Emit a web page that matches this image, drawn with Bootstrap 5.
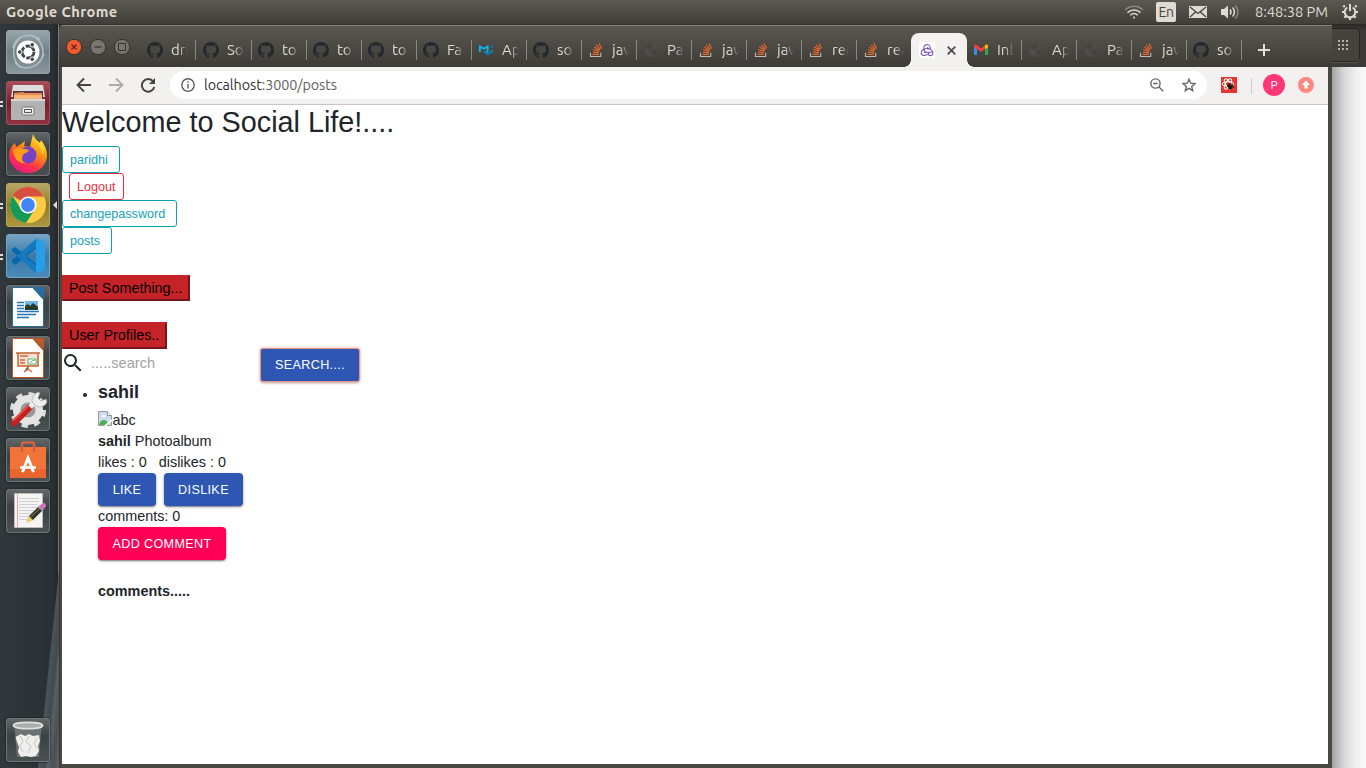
<!DOCTYPE html>
<html lang="en">
<head>
<meta charset="utf-8">
<title>Social Life</title>
<link href="https://cdn.jsdelivr.net/npm/bootstrap@5.3.0/dist/css/bootstrap.min.css" rel="stylesheet">
<style>
html,body{height:768px;overflow:hidden}
body{font-family:"Liberation Sans",Arial,sans-serif;font-size:14.4px;line-height:21px;color:#212529;background:#2e3436}
svg{display:block;flex:none}
.ui-font{font-family:Ubuntu,"Noto Sans",sans-serif}
.top-panel{height:24px;background:linear-gradient(#5b5950,#403e39);color:#dfdbd2;padding:0 7px 0 6px;font-size:14px;line-height:24px}
.top-panel .app-name{font-weight:700;font-size:14.67px;letter-spacing:.38px}
.lang{width:20px;height:20px;background:#dfdbd2;color:#45433e;border-radius:2px;font-size:14px;line-height:21px;letter-spacing:-.4px}
.clock{width:75px;font-size:14.67px;letter-spacing:-.05px;white-space:nowrap}
.desk{height:744px}
.launcher{width:59px;padding:6px 0 6px 6px;background:linear-gradient(96deg,transparent 0 76%,#4b5357 77%,#414b4f 84%,#586063 87%,#485156 93%,#5d6365) 0 460px/59px 284px no-repeat,linear-gradient(90deg,#30383b 0,#2a3033 53px,#222729 58px,#777 58px);gap:7px}
.tile{width:44px;height:44px;border-radius:4px;background:linear-gradient(#64686a,#3b4244 40%,#4b5153);box-shadow:inset 0 0 0 1px #6d7273,0 0 2px #111}
.tile.t-dash{background:linear-gradient(#9ba8ad,#6f7f85 50%,#8b999e);box-shadow:inset 0 0 0 1px #94a1a6}
.tile.t-files{background:linear-gradient(#a8505a,#78202c 50%,#8e3440);box-shadow:inset 0 0 0 1px #a44f59}
.tile.t-chrome{background:linear-gradient(#b8a969,#927c27 50%,#ad973e);box-shadow:inset 0 0 0 1px #b9a75d}
.tile.t-code{background:linear-gradient(#79a7c7,#397aa8 50%,#4c8bb8);box-shadow:inset 0 0 0 1px #76a3c3}
.pips{left:-6px;top:19px}
.pointer{left:46px;top:17px}
.win{width:1273px;background:#4b4842;padding:0 4px 4px 3px;border-top-left-radius:6px;box-shadow:inset 1px 0 #37352f}
.desk-back{background:linear-gradient(#292824,#3c3b37 6px)}
.tabstrip{height:43px;margin:0 -4px 0 -3px;background:linear-gradient(#33312d 0 1px,#85827a 1px 2px,#5a574e 2px,#3c3b37);border-radius:6px 0 0 0;padding-left:7px;color:#dfdbd2}
.winbtns{width:75px;gap:8px;padding-top:2px}
.tabx{width:55px;height:34px;padding-left:6px;gap:8px;position:relative;margin-top:9px}
.tabx.lead-tab{width:56px}
.tabx::after{content:"";position:absolute;right:0;top:7px;height:20px;width:1px;background:#8b8880}
.tabx.plain{width:54px}
.tabx.lead-tab::after{right:1px}
.tabx.plain::after,.tabx.current::after{display:none}
.tabx span{width:17px;flex:none;white-space:nowrap;font-size:15px;line-height:24px;-webkit-mask-image:linear-gradient(90deg,#000 45%,transparent);mask-image:linear-gradient(90deg,#000 45%,transparent)}
.tabx.current{background:#f2f1f0;border-radius:8px 8px 0 0;width:56px;padding-left:8px;gap:12px}
.tabx.current::before{content:"";position:absolute;left:-7px;right:-7px;bottom:0;height:7px;background:radial-gradient(circle at 0 0,transparent 6.5px,#f2f1f0 7px) 0 0/7px 7px no-repeat,radial-gradient(circle at 100% 0,transparent 6.5px,#f2f1f0 7px) 100% 0/7px 7px no-repeat}
.fav-box{background:#fff;border-radius:2px;position:relative}
.toolbar{height:38px;background:#f2f1f0;border-bottom:1px solid #c9c7c5;padding-left:14px;padding-right:13px}
.omnibox{width:1037px;height:28px;margin-left:14px;margin-top:-1px;border-radius:14px;background:#fff;padding:0 11px;color:#5f5f5f;font-size:14.4px;letter-spacing:-.09px}
.omnibox b{font-weight:400;color:#333}
.avatar{width:22px;height:22px;border-radius:50%;background:#ff3775;color:#fff;font-size:12px;line-height:22px}
.page{height:659px;background:#fff}
.page h2{font-size:28.8px;line-height:34px;margin:0 0 7px;font-weight:400}
.btn-mini{--bs-btn-padding-y:0;padding:1px 7px 0;font-size:12.6px;line-height:25px;border-radius:3px;height:27px;text-align:left}
.btn-teal{color:#17a2b8;border-color:#08a0b5}
.btn-rouge{color:#ea303f;border-color:#e12c45}
.native{background:#c62328;border:2px solid;border-color:#c62328 #74171b #74171b #c62328;color:#000;height:26px;line-height:22px;padding:0 5px;text-align:left}
.btn-mat{background:#2d57b2;color:#fff;font-size:12.6px;letter-spacing:.36px;line-height:31px;height:33px;padding:2px 0 0;border:0;border-radius:4px;box-shadow:0 1px 3px rgba(0,0,0,.35),0 1px 1px rgba(0,0,0,.25)}
.btn-mat.pink{background:#ff0056}
.btn-mat.ring{border-radius:2px;box-shadow:0 0 0 1px #e6958a,0 0 3px 1px #e6a59b,0 2px 3px rgba(0,0,0,.3)}
.search-row{height:32px}
.search-row input{width:170px;height:28px;border:0;outline:0;padding:0;margin-left:6px;font-size:14.6px}
.search-row input::placeholder{color:#a2a2a2;opacity:1}
.post-list{padding-left:36px;margin:0}
.post-list h5{font-size:18px;line-height:22px;font-weight:700;margin:0 0 7px}
.dot{left:-15px;top:12px;width:4px;height:4px;border-radius:50%;background:#212529}
.side{width:34px}
.side-top{height:43px;background:linear-gradient(#292824,#3c3b37 6px);}
.side-top div{width:28px;height:34px;margin-top:4px;border:1px solid #25241f;border-left:0;border-radius:0 5px 5px 0;background:#45433d;box-shadow:0 1px #55534c}
.side-body{background:linear-gradient(90deg,#a2a2a2,#d4d4d4 11px,#efefef 23px,#fafafa)}
</style>
</head>
<body>
<svg width="0" height="0" class="position-absolute">
<defs>
<symbol id="gh" viewBox="0 0 16 16"><path fill="#24292e" d="M8 0C3.58 0 0 3.58 0 8c0 3.54 2.29 6.53 5.47 7.59.4.07.55-.17.55-.38 0-.19-.01-.82-.01-1.49-2.01.37-2.53-.49-2.69-.94-.09-.23-.48-.94-.82-1.13-.28-.15-.68-.52-.01-.53.63-.01 1.08.58 1.23.82.72 1.21 1.87.87 2.33.66.07-.52.28-.87.51-1.07-1.78-.2-3.64-.89-3.64-3.95 0-.87.31-1.59.82-2.15-.08-.2-.36-1.02.08-2.12 0 0 .67-.21 2.2.82.64-.18 1.32-.27 2-.27s1.36.09 2 .27c1.53-1.04 2.2-.82 2.2-.82.44 1.1.16 1.92.08 2.12.51.56.82 1.27.82 2.15 0 3.07-1.87 3.75-3.65 3.95.29.25.54.73.54 1.48 0 1.07-.01 1.93-.01 2.2 0 .21.15.46.55.38A8.01 8.01 0 0 0 16 8c0-4.42-3.58-8-8-8z"/></symbol>
<symbol id="so" viewBox="0 0 16 16"><path d="M2.500 10.700v3.800h10.200v-3.800" fill="none" stroke="#bcbbbb" stroke-width="1.100"/><path d="M4.500 12.300h6.300M4.700 10l6.200.6M5.200 7.500l6 1.800M6.300 5l5.300 3.200M8.200 2.800l4.200 4.500M11 1.400l2.600 5" stroke="#f26a25" stroke-width="1.150"/></symbol>
<symbol id="mui" viewBox="0 0 16 16"><path d="M1.900 10V4.400l3.900 2.300 3.900-2.300v4.800l-3 1.600" fill="none" stroke="#0db4f4" stroke-width="1.800"/><path d="M6.200 10l3.600 2.300 4.300-2.500V7.700M14.100 3.600v2.200" fill="none" stroke="#087fc0" stroke-width="1.800"/></symbol>
<symbol id="globe" viewBox="0 0 16 16"><circle cx="8" cy="8" r="7" fill="#4d4d4d"/><path fill="#444340" d="M3 4l3-2 3 1 1 2-2 1v2L5 7 2 6zM8 9l4-1 2-3 .8 3-2 4-3 2-1-2z"/></symbol>
<symbol id="redux" viewBox="0 0 16 16"><g fill="none" stroke="#7c52bd" stroke-width="1.050"><path d="M6 10C4 6.800 4.400 2.600 8 2.500c3 0 3.800 2.700 3.100 4.900M9.800 7.100C6.700 5.400 2.500 7.500 2.200 10.500c-.2 3.200 3.800 3.900 6.100 1.800M6.600 10.300h6.800M8.300 6.200c3.600.2 6.200 3 5.500 5.800-.7 2.200-3.700 2-5 .2"/></g><g fill="#7c52bd"><circle cx="8.700" cy="6.200" r="1"/><circle cx="6.200" cy="10.300" r="1"/><circle cx="9.500" cy="11.800" r="1"/></g></symbol>
<symbol id="gmail" viewBox="0 0 16 16"><path fill="#4285f4" d="M1 4v9h3V7z"/><path fill="#34a853" d="M12 7v6h3V4z"/><path fill="#ea4335" d="M1 3.500c0-1 1.500-1.500 2.500-.7L8 6.200l4.500-3.400L12 7 8 10 1 5z"/><path fill="#fbbc04" d="M12 3.200c1.500-1.200 3-.5 3 .8v1l-3 2.200z"/></symbol>
<linearGradient id="ffg" x1=".8" y1="0" x2=".25" y2="1"><stop stop-color="#fff044"/><stop offset=".38" stop-color="#ff980e"/><stop offset=".7" stop-color="#ff3647"/><stop offset="1" stop-color="#e31587"/></linearGradient>
</defs>
</svg>

<div class="top-panel ui-font d-flex align-items-center">
  <div class="app-name me-auto">Google Chrome</div>
  <svg width="20" height="16" viewBox="0 0 20 16" fill="none" stroke="#dfdbd2" stroke-width="1.500"><path stroke="#8c8980" d="M1 6c5-5 13-5 18 0"/><path d="M3.500 8.600c3.800-3.600 9.200-3.600 13 0M6.300 11.200c2.200-2 5.200-2 7.400 0"/><circle cx="10" cy="13.500" r="1" fill="#dfdbd2" stroke="none"/></svg>
  <div class="lang text-center" style="margin-left:12px">En</div>
  <svg style="margin-left:13px" width="18" height="12" viewBox="0 0 18 12"><path fill="#dfdbd2" d="M0 0h18v12H0z"/><path d="M1 1l8 6.500L17 1M1 11l5.500-5M17 11l-5.500-5" fill="none" stroke="#45433e" stroke-width="1.300"/></svg>
  <svg style="margin-left:13px" width="21" height="16" viewBox="0 0 21 16" fill="none"><path fill="#dfdbd2" d="M1 5h3l4-3.500v13L4 11H1z"/><path stroke="#dfdbd2" stroke-width="1.500" d="M10 5.500q2 2.500 0 5M12.700 3.500q3.600 4.500 0 9"/><path stroke="#8c8980" stroke-width="1.500" d="M15.500 1.500q5 6.500 0 13"/></svg>
  <div class="clock" style="margin-left:14px">8:48:38 PM</div>
  <svg style="margin-left:11px" width="18" height="18" viewBox="0 0 18 18" fill="none" stroke="#dfdbd2"><path stroke-width="2" d="M6.300 4.500a5.300 5.300 0 1 0 5.400 0M9 1v7"/><path stroke-width="2.200" d="M3.800 4L2.300 2.500M14.200 4l1.500-1.500M3.500 9H1M17 9h-2.500M5 13l-1.700 1.700M13 13l1.700 1.700M9 14.500V17"/></svg>
</div>

<div class="desk d-flex">
  <nav class="launcher d-flex flex-column flex-shrink-0">
    <div class="tile t-dash"><svg width="44" height="44" viewBox="0 0 44 44"><g fill="none" stroke="#b4bec2" stroke-width="1.500"><path d="M7 18C9 6 23 2 34 9M24 5c12 3 17 17 9 28M38 24C33 38 19 42 9 33M15 38C6 30 5 18 13 9"/></g><circle cx="22" cy="22" r="11.500" fill="#fff"/><circle cx="22" cy="22" r="6" fill="none" stroke="#40494c" stroke-width="2.800" stroke-dasharray="11 1.560"/><g fill="#40494c" stroke="#fff"><circle cx="13.800" cy="22" r="2.300"/><circle cx="26.200" cy="14.800" r="2.300"/><circle cx="26.200" cy="29.200" r="2.300"/></g></svg></div>
    <div class="tile t-files position-relative"><svg width="44" height="44" viewBox="0 0 44 44"><path fill="#ddd" d="M7 4h30l2 12H5z"/><path fill="#534" d="M7 10h30v9H7z"/><path fill="#e58b4b" d="M8 12l9-1 2 1h17v6H8z"/><path fill="#f7b47b" d="M8 14h28v4H8z"/><rect x="5" y="18" width="34" height="21" rx="1" fill="#b3b3b3"/><path fill="#d6d6d6" d="M5 18h34v2H5z"/><rect x="16" y="26" width="12" height="8" rx="1" fill="#eee" stroke="#777"/><path fill="none" stroke="#555" d="M18.500 28.500h7v3h-7z"/></svg><svg class="pips position-absolute" width="4" height="8"><path d="M0 2h3M0 6h3" stroke="#ddd" stroke-width="2"/></svg></div>
    <div class="tile"><svg width="44" height="44" viewBox="0 0 44 44"><path fill="url(#ffg)" d="M27 2c0 5 4 6 7 9l1-3c4 5 6 10 6 15 0 10-8 18-19 18S3 33 3 23c0-5 3-10 6-12l1 4 5-3 4-3-1 5 6 1z"/><circle cx="22" cy="23" r="8.500" fill="#7543c5"/><path fill="#ff9d19" d="M7 18c5-4 9-1 12-1l4 1c-1 3-5 3-6 5-2 4-1 7 3 8-7 1-12-4-13-13z"/><path fill="#ffdd35" d="M27 2c0 7 10 10 9 21 3-5 1-9-1-13l-2 1c-3-3-4-5-6-9z"/></svg></div>
    <div class="tile t-chrome position-relative"><svg width="44" height="44" viewBox="0 0 44 44"><circle cx="22" cy="22" r="18" fill="#fbcb42"/><path fill="#d94f3f" d="M22 22L6.500 12.800A18 18 0 0 1 37.800 13.500H22z"/><path fill="#149b57" d="M6.400 13A18 18 0 0 0 20 39.900l9-13.900-7 4-7-4z"/><circle cx="22" cy="22" r="8.600" fill="#fff"/><circle cx="22" cy="22" r="6.900" fill="#4285f4"/></svg><svg class="pips position-absolute" width="4" height="8"><path d="M0 2h3M0 6h3" stroke="#ddd" stroke-width="2"/></svg><svg class="pointer position-absolute" width="5" height="10"><path d="M5 1v8L1 5z" fill="#ddd"/></svg></div>
    <div class="tile t-code position-relative"><svg width="44" height="44" viewBox="0 0 44 44"><path d="M6 15l3-2 23 18v8L6 17zM6 28l3 3 23-18V5L6 26z" fill="#0868ad"/><path fill="#2a9de8" d="M30 4l9 4v28l-9 4V4z"/><path fill="#147bc0" d="M30 13L18 22l12 9v8L13 24v-4L30 5z"/></svg><svg class="pips position-absolute" width="4" height="8"><path d="M0 2h3M0 6h3" stroke="#ddd" stroke-width="2"/></svg></div>
    <div class="tile"><svg width="44" height="44" viewBox="0 0 44 44"><path fill="#fff" stroke="#236fa2" d="M6.500 2.500h20l11 12v27h-31z"/><path fill="#236fa2" d="M27 2h11v12z"/><path stroke="#2678b5" stroke-width="1.700" d="M11 17.500h7M11 20.500h7M11 23.500h7M11 26.500h22M11 29.500h19M11 32.500h12"/><path fill="#71b7e8" d="M19 16h13v9H19z"/><path fill="#293b2d" d="M19 25v-4l3-2 2 2 3-3 5 4v3z"/></svg></div>
    <div class="tile"><svg width="44" height="44" viewBox="0 0 44 44"><path fill="#fff" stroke="#bd5725" d="M6.500 2.500h20l11 12v27h-31z"/><path fill="#bd5725" d="M27 2h11v12z"/><path fill="#f8e1d5" stroke="#c86032" stroke-width="1.500" d="M12 17h20v13H12zM10 17h24"/><path stroke="#d06a3b" stroke-width="1.500" d="M14 20h8M14 24h5M14 27h5M22 30v3l-4 3M22 33l4 3"/><path fill="#fff" stroke="#5b7" d="M22 23h8v5h-8zM24 27l2-2 3-1"/></svg></div>
    <div class="tile"><svg width="44" height="44" viewBox="0 0 44 44"><circle cx="22" cy="23" r="15.800" fill="none" stroke="#ddd" stroke-width="4.500" stroke-dasharray="6.200 6.200"/><circle cx="22" cy="23" r="11" fill="none" stroke="#e4e4e4" stroke-width="8"/><circle cx="22" cy="23" r="7.500" fill="#999"/><path d="M8 36L23 21" stroke="#c3201f" stroke-width="6.500" stroke-linecap="round"/><path d="M7 34L22 19" stroke="#ed5a57" stroke-width="1.500"/><path d="M24 20l6-6" stroke="#eee" stroke-width="5"/><path fill="#eee" stroke="#999" stroke-width=".6" d="M26 15c0-5 2-8 6-10l2 1-2 5 3 3 5-2 1 3c-2 5-8 6-11 4z"/></svg></div>
    <div class="tile"><svg width="44" height="44" viewBox="0 0 44 44"><path fill="none" stroke="#cf6546" stroke-width="2.500" d="M16 13V6q0-1.500 1.500-1.500h9Q28 4.500 28 6v7"/><path fill="#f37439" d="M4 9h36v31H4z"/><path fill="#e9652f" d="M4 31h36v9H4z"/><path fill="none" stroke="#c65d43" stroke-width="2" d="M16 9v5M28 9v5"/><path d="M16.500 34l5.500-14 5.500 14" fill="none" stroke="#fff" stroke-width="3"/><path stroke="#fff" stroke-width="2.500" d="M14 29.500h16"/></svg></div>
    <div class="tile"><svg width="44" height="44" viewBox="0 0 44 44"><path fill="#f4f4f2" stroke="#bbb" d="M8.500 4.500h28v34h-28z"/><path stroke="#cfd0d3" d="M13 9.500h20M13 12.500h20M13 15.500h18M13 18.500h19M13 21.500h16M13 24.500h14M13 27.500h10M13 30.500h8"/><path stroke="#e9a5a5" d="M11.500 5v33"/><path fill="#e8ce6c" d="M20 34l3-8 5 5z"/><path d="M25 29L35 19" stroke="#30342b" stroke-width="5.500"/><path d="M25 28L35 18" stroke="#7a8061"/><path d="M34 20l2-2" stroke="#bbb" stroke-width="6"/><path d="M36 18l1.500-1.500" stroke="#cd72b6" stroke-width="5" stroke-linecap="round"/></svg></div>
    <div class="tile mt-auto"><svg width="44" height="44" viewBox="0 0 44 44"><path fill="#899090" opacity=".6" d="M8.500 9h27L33 39H11z"/><path fill="#eeeeec" d="M9.500 19l5.500-3 4 2 4-2 4 2 6-1 1 6-2 5 1 5-3 5-5 1-5-1-5 1-3-5 1-5-2-5z"/><path stroke="#c4c6c4" fill="none" d="M14 18l3 5-3 5 3 6M23 18l-3 6 5 4-3 7M31 20l-3 6 3 4"/><ellipse cx="22" cy="7.500" rx="14.500" ry="3.200" fill="#a9adab" stroke="#e1e2df" stroke-width="1.800"/></svg></div>
  </nav>

  <div class="desk-back flex-shrink-0"><main class="win">
    <div class="tabstrip ui-font d-flex align-items-center">
      <div class="winbtns d-flex">
        <svg width="16" height="16" viewBox="0 0 16 16"><circle cx="8" cy="8" r="7.700" fill="#f15a30" stroke="#33312d"/><path d="M5.500 5.500l5 5m0-5l-5 5" stroke="#662414" stroke-width="1.200"/></svg>
        <svg width="16" height="16" viewBox="0 0 16 16"><circle cx="8" cy="8" r="7.700" fill="#77756e" stroke="#33312d"/><path d="M4.500 8h7" stroke="#35332e" stroke-width="1.200"/></svg>
        <svg width="16" height="16" viewBox="0 0 16 16"><circle cx="8" cy="8" r="7.700" fill="#77756e" stroke="#33312d"/><path d="M4.500 4.500h7v7h-7z" fill="none" stroke="#35332e"/></svg>
      </div>
      <div class="tabx lead-tab d-flex align-items-center"><svg width="16" height="16"><use href="#gh"/></svg><span>dri</span></div>
      <div class="tabx d-flex align-items-center"><svg width="16" height="16"><use href="#gh"/></svg><span>So</span></div>
      <div class="tabx d-flex align-items-center"><svg width="16" height="16"><use href="#gh"/></svg><span>to</span></div>
      <div class="tabx d-flex align-items-center"><svg width="16" height="16"><use href="#gh"/></svg><span>to</span></div>
      <div class="tabx d-flex align-items-center"><svg width="16" height="16"><use href="#gh"/></svg><span>to</span></div>
      <div class="tabx d-flex align-items-center"><svg width="16" height="16"><use href="#gh"/></svg><span>Fa</span></div>
      <div class="tabx d-flex align-items-center"><svg width="16" height="16"><use href="#mui"/></svg><span>Ap</span></div>
      <div class="tabx d-flex align-items-center"><svg width="16" height="16"><use href="#gh"/></svg><span>so</span></div>
      <div class="tabx d-flex align-items-center"><svg width="16" height="16"><use href="#so"/></svg><span>jav</span></div>
      <div class="tabx d-flex align-items-center"><svg width="16" height="16"><use href="#globe"/></svg><span>Pa</span></div>
      <div class="tabx d-flex align-items-center"><svg width="16" height="16"><use href="#so"/></svg><span>jav</span></div>
      <div class="tabx d-flex align-items-center"><svg width="16" height="16"><use href="#so"/></svg><span>jav</span></div>
      <div class="tabx d-flex align-items-center"><svg width="16" height="16"><use href="#so"/></svg><span>rea</span></div>
      <div class="tabx plain d-flex align-items-center"><svg width="16" height="16"><use href="#so"/></svg><span>rea</span></div>
      <div class="tabx current d-flex align-items-center"><svg class="fav-box" width="16" height="16"><use href="#redux"/></svg><svg width="9" height="9" viewBox="0 0 9 9"><path d="M.7.7l7.600 7.600m0-7.600L.7 8.300" stroke="#4a4a4a" stroke-width="1.700"/></svg></div>
      <div class="tabx d-flex align-items-center"><svg width="16" height="16"><use href="#gmail"/></svg><span>Inb</span></div>
      <div class="tabx d-flex align-items-center"><svg width="16" height="16"><use href="#globe"/></svg><span>Ap</span></div>
      <div class="tabx d-flex align-items-center"><svg width="16" height="16"><use href="#globe"/></svg><span>Pa</span></div>
      <div class="tabx d-flex align-items-center"><svg width="16" height="16"><use href="#so"/></svg><span>jav</span></div>
      <div class="tabx d-flex align-items-center"><svg width="16" height="16"><use href="#gh"/></svg><span>so</span></div>
      <svg style="margin-left:16px;margin-top:9px" width="12" height="12"><path d="M6 0v12M0 6h12" stroke="#e6e2da" stroke-width="2"/></svg>
    </div>

    <div class="toolbar ui-font d-flex align-items-center">
      <svg width="16" height="16" viewBox="0 0 16 16" fill="none" stroke="#444" stroke-width="1.800" style="margin-top:-1px"><path d="M15 8H2M8 1.500L1.500 8 8 14.500"/></svg>
      <svg style="margin-left:16px;margin-top:-1px" width="16" height="16" viewBox="0 0 16 16" fill="none" stroke="#aaa" stroke-width="1.800"><path d="M1 8h13M8 1.500L14.500 8 8 14.500"/></svg>
      <svg style="margin-left:16px;margin-top:-1px" width="16" height="16" viewBox="0 0 16 16"><path d="M13.200 4.500A6.300 6.300 0 1 0 14.300 10" fill="none" stroke="#444" stroke-width="2"/><path d="M15 1v6H9z" fill="#444"/></svg>
      <div class="omnibox d-flex align-items-center">
        <svg width="14" height="14" viewBox="0 0 14 14" fill="none" stroke="#5f5f5f" stroke-width="1.400"><circle cx="7" cy="7" r="6.200"/><path d="M7 6v4.500M7 3.300v1.500"/></svg>
        <div style="margin-left:9px"><b>localhost</b>:3000/posts</div>
        <svg class="ms-auto" width="14" height="14" viewBox="0 0 14 14" fill="none" stroke="#666" stroke-width="1.400"><circle cx="5.500" cy="5.500" r="4.600"/><path d="M9 9l4.200 4.200M3.300 5.500h4.400"/></svg>
        <svg style="margin-left:18px" width="14" height="14" viewBox="0 0 14 14" fill="none" stroke="#666" stroke-width="1.400"><path d="M7 1.200l1.700 4 4.300.4-3.300 2.800 1 4.300L7 10.400l-3.700 2.300 1-4.300L1 5.600l4.300-.4z"/></svg>
      </div>
      <svg style="margin-left:14px;margin-top:-1px" width="16" height="16" viewBox="0 0 16 16"><path fill="#e8352f" d="M0 0h16v16H0z"/><g fill="none" stroke="#fff" stroke-width="1"><ellipse cx="7" cy="7" rx="5.800" ry="2.400"/><ellipse cx="7" cy="7" rx="5.800" ry="2.400" transform="rotate(60 7 7)"/><ellipse cx="7" cy="7" rx="5.800" ry="2.400" transform="rotate(120 7 7)"/></g><path fill="#241410" d="M7 7l2-1 1 2 2 1-1 3-2 1-2-3-1-1z"/><path stroke="#241410" stroke-width=".9" d="M6 9l3 3M9 6l4 5M12 8l-5 4"/></svg>
      <svg style="margin-left:14px" width="1" height="16"><path fill="#ccc" d="M0 0h1v16H0z"/></svg>
      <div class="avatar text-center" style="margin-left:11px;margin-top:-1px">P</div>
      <svg style="margin-left:13px;margin-top:-1px" width="16" height="16" viewBox="0 0 16 16"><circle cx="8" cy="8" r="8" fill="#ff8780"/><path fill="#fff" d="M8 3.500l4 4.500H9.700v3.500H6.300V8H4z"/></svg>
    </div>

    <section class="page">
      <h2>Welcome to Social Life!....</h2>
      <div class="d-flex flex-column align-items-start">
        <a class="btn btn-mini btn-teal" style="width:58px">paridhi</a>
        <a class="btn btn-mini btn-rouge" style="width:55px;margin-left:7px">Logout</a>
        <a class="btn btn-mini btn-teal" style="width:115px">changepassword</a>
        <a class="btn btn-mini btn-teal" style="width:50px">posts</a>
        <button class="native" style="width:128px;margin-top:21px">Post Something...</button>
        <button class="native" style="width:105px;margin-top:21px;height:27px;padding-bottom:1px">User Profiles..</button>
      </div>
      <div class="search-row d-flex">
        <svg style="margin:2px 0 0 -1px" width="24" height="24" viewBox="0 0 24 24"><path fill="#212529" d="M15.500 14h-.79l-.28-.27A6.470 6.470 0 0 0 16 9.500 6.500 6.500 0 1 0 9.500 16c1.610 0 3.090-.59 4.230-1.570l.27.28v.79l5 4.990L20.490 19l-4.990-5zm-6 0C7.010 14 5 11.990 5 9.500S7.010 5 9.500 5 14 7.010 14 9.500 11.990 14 9.500 14z"/></svg>
        <input type="text" placeholder=".....search">
        <button class="btn-mat ring" style="width:98px;height:32px;line-height:31px;padding-top:1px">SEARCH....</button>
      </div>
      <ul class="post-list list-unstyled">
        <li class="position-relative">
          <i class="dot position-absolute"></i>
          <h5>sahil</h5>
          <div class="d-flex align-items-center" style="height:21px"><svg style="margin-top:-4px" width="14" height="15" viewBox="0 0 14 15"><path fill="#c8dcf4" stroke="#999" d="M.5.500h9l4 4v10H.5z"/><path fill="#fff" stroke="#999" d="M9.500.5v4h4"/><path fill="#fff" d="M3 6q0-2 2-2 2-1 3 2z"/><path fill="#4caf50" d="M1 14q1-5 5-5 3 0 5 5z"/><path stroke="#fff" stroke-width="2" d="M7 15l7-6"/></svg><span style="margin-left:.4px">abc</span></div>
          <div><b>sahil</b> Photoalbum</div>
          <div>likes : 0 &nbsp; dislikes : 0</div>
          <div class="d-flex gap-2"><button class="btn-mat" style="width:58px">LIKE</button><button class="btn-mat" style="width:79px">DISLIKE</button></div>
          <div>comments: 0</div>
          <button class="btn-mat pink d-block" style="width:128px">ADD COMMENT</button>
          <div style="margin-top:21px"><b>comments.....</b></div>
        </li>
      </ul>
    </section>
  </main></div>

  <aside class="side d-flex flex-column">
    <div class="side-top"><div><svg width="28" height="34"><path fill="#b5b2aa" d="M6 11h2v2H6zM10 11h2v2h-2zM14 11h2v2h-2zM6 15h2v2H6zM10 15h2v2h-2zM14 15h2v2h-2zM6 19h2v2H6zM10 19h2v2h-2zM14 19h2v2h-2z"/></svg></div></div>
    <div class="side-body flex-fill"></div>
  </aside>
</div>
<script src="https://cdn.jsdelivr.net/npm/bootstrap@5.3.0/dist/js/bootstrap.bundle.min.js"></script>
</body>
</html>
